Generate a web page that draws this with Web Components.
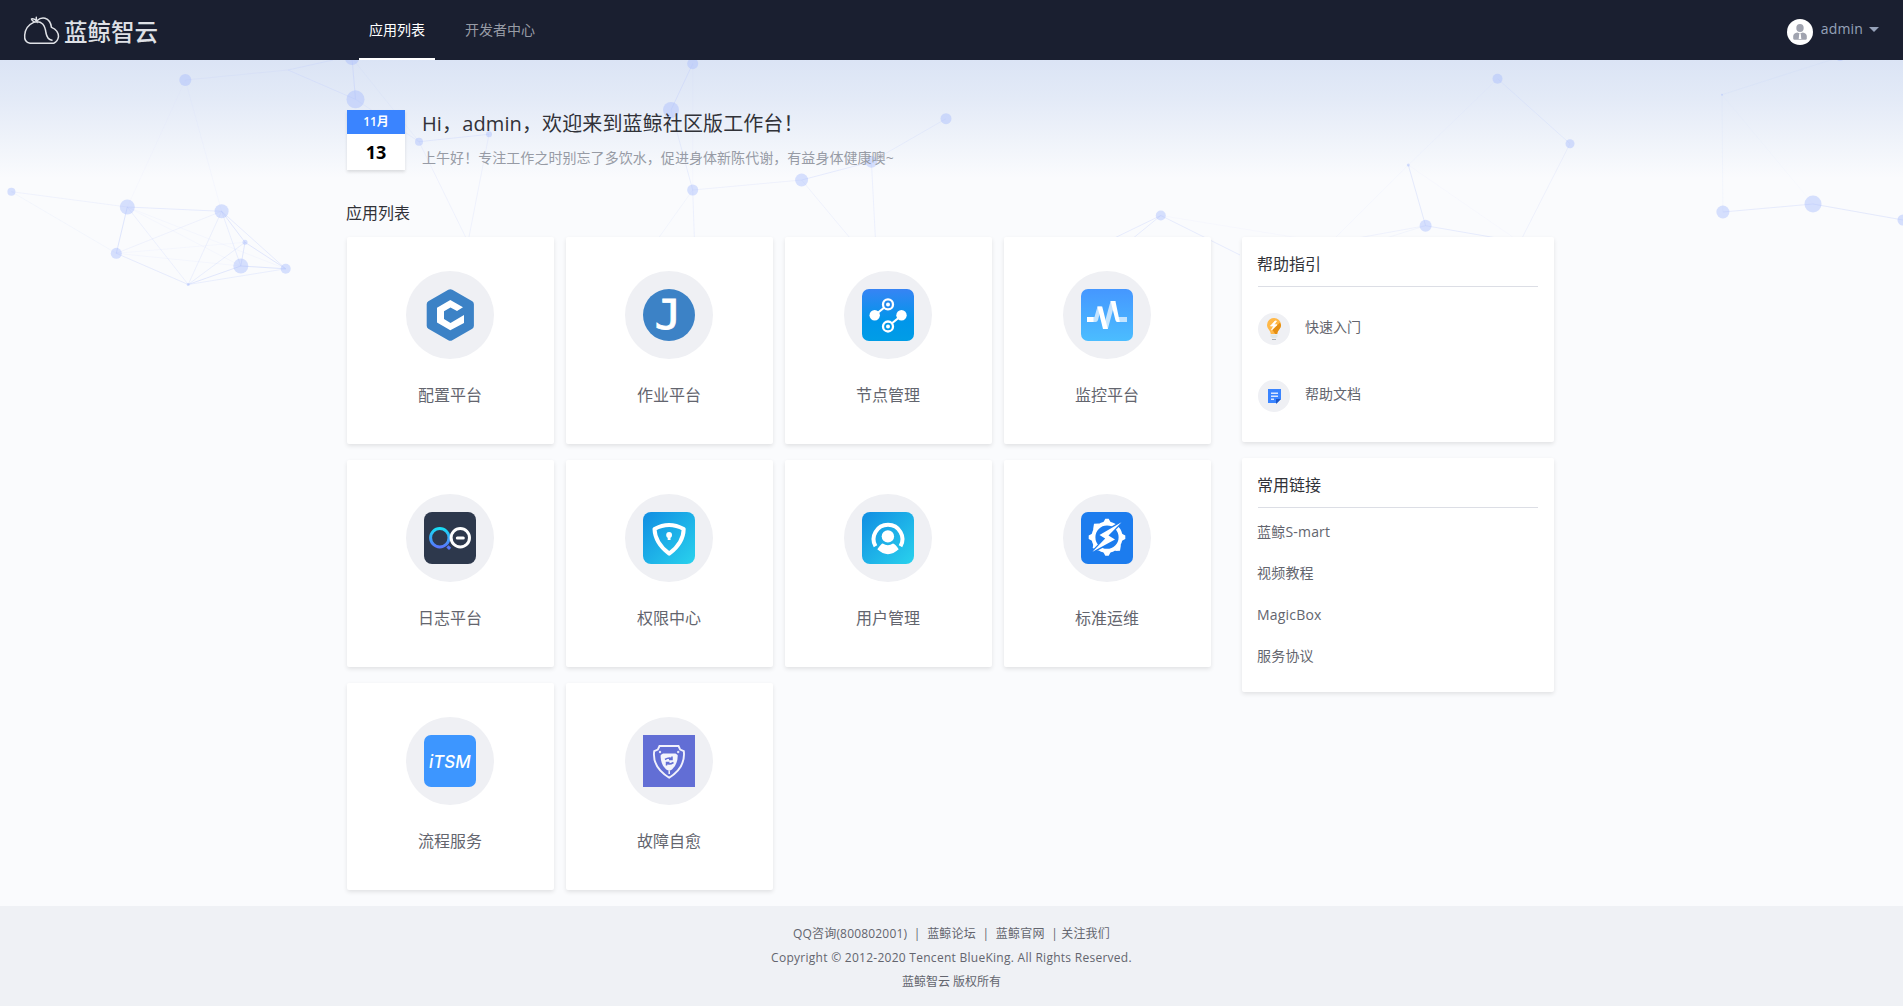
<!DOCTYPE html>
<html lang="zh-CN">
<head>
<meta charset="utf-8">
<title>蓝鲸智云</title>
<style>
html,body{margin:0;padding:0}
body{font-family:"Open Sans","Noto Sans CJK SC",sans-serif;font-size:14px;color:#63656e;background:#fafbfd}
</style>
</head>
<body>
<bk-desktop></bk-desktop>
<script>
const define = (name, html) => {
  const t = document.createElement('template');
  t.innerHTML = html;
  customElements.define(name, class extends HTMLElement {
    constructor() {
      super();
      this.attachShadow({mode: 'open'}).appendChild(t.content.cloneNode(true));
    }
  });
};

// Icons, each on a 52 × 52 grid
const ICONS = {
  cmdb: `<path d="M24.300 .8q2-1.200 4 0l20 11.400q1.600 1 1.600 3v21.600q0 2-1.600 3l-20 11.400q-2 1.200-4 0l-20-11.400q-1.600-1-1.600-3v-21.600q0-2 1.600-3z" fill="#3c82c6"/><path d="M26.300 11 39 18.300 33 22 26.500 18.500 20 22.300V30l6.500 3.900L40 26v8L26.300 41.300 13 33.600V18.700z" fill="#fff"/>`,
  job: `<circle cx="26" cy="26" r="26" fill="#3c82c6"/><text transform="translate(11.500 40) scale(1.120 1)" font-family="DejaVu Sans Mono" font-size="40" fill="#fff" stroke="#fff" stroke-width=".8">J</text>`,
  node: `<defs><linearGradient id="g" x2="0" y2="1"><stop stop-color="#3784f4"/><stop offset=".62" stop-color="#0096ea"/><stop offset="1" stop-color="#009de6"/></linearGradient></defs><rect width="52" height="52" rx="7" fill="url(#g)"/><path d="M12.500 26.500 26 15.500M26 37.500 39.500 26.500" stroke="#fff" stroke-width="2.200"/><circle cx="12.700" cy="26.300" r="5.200" fill="#fff"/><circle cx="39.500" cy="26.300" r="5.200" fill="#fff"/><g fill="#2189ee" stroke="#fff" stroke-width="2.300"><circle cx="26" cy="15.400" r="5"/><circle cx="26" cy="37.500" r="5" fill="#0098e9"/></g><circle cx="26" cy="15.400" r="2" fill="#fff"/><circle cx="26" cy="37.500" r="2" fill="#fff"/>`,
  monitor: `<defs><linearGradient id="g" x2="0" y2="1"><stop stop-color="#4597ff"/><stop offset="1" stop-color="#4bbdff"/></linearGradient></defs><rect width="52" height="52" rx="7" fill="url(#g)"/><path d="M12 28h1.500l3-10.400h4L17 31q-.6 2-2.500 2H12zM22 39.900l7.600-28h4.800l-7.600 28zM37 28h9v5h-8.500z" fill="#fff" opacity=".68"/><path d="M6 28h6.500v5H6zM16.400 17.600h4.800l5.600 22.300H22zM29.600 11.900h4.800L38.800 33h-2.600q-1.400 0-1.800-2z" fill="#fff"/>`,
  log: `<defs><linearGradient id="g" x2="0" y2="1"><stop stop-color="#19dcf5"/><stop offset="1" stop-color="#5876fb"/></linearGradient></defs><rect width="52" height="52" rx="8" fill="#2d384c"/><circle cx="15.800" cy="25.800" r="9.200" fill="none" stroke="url(#g)" stroke-width="3"/><path d="m23.400 34.300 2.700 2.500" stroke="#5877f8" stroke-width="3.200"/><circle cx="36.300" cy="25.800" r="9.200" fill="none" stroke="#fff" stroke-width="3"/><path d="M33.300 26h6" stroke="#fff" stroke-width="3" stroke-linecap="round"/>`,
  iam: `<defs><linearGradient id="g" x2="1" y2="1"><stop stop-color="#118de2"/><stop offset="1" stop-color="#29d2ed"/></linearGradient></defs><rect width="52" height="52" rx="8" fill="url(#g)"/><path d="M11.500 17Q26 9 40.700 17 40.500 31 26.200 41.700 12 31 11.500 17z" fill="none" stroke="#fff" stroke-width="4" stroke-linejoin="round"/><circle cx="26.100" cy="23" r="2.900" fill="#fff"/><path d="M26.100 23v5" stroke="#fff" stroke-width="2.800"/>`,
  user: `<defs><linearGradient id="g" x2="1" y2="1"><stop stop-color="#118de2"/><stop offset="1" stop-color="#29d2ed"/></linearGradient></defs><rect width="52" height="52" rx="8" fill="url(#g)"/><path d="M13.500 34.300A14.400 14.400 0 1 1 38.500 34.300" fill="none" stroke="#fff" stroke-width="4"/><circle cx="25.900" cy="24.400" r="6.200" fill="#fff"/><path d="M15.300 37.300Q19.400 31.500 20.800 31.600q5 3.200 10.200 0 2 .2 5.700 5.700Q26 47 15.300 37.300z" fill="#fff"/>`,
  ops: `<rect width="52" height="52" rx="7" fill="#1c7cee"/><circle cx="26" cy="25.200" r="13.600" fill="none" stroke="#fff" stroke-width="4"/><path d="M22 11l2.300-4.300h3.400L30 11zM22 39.500l2.300 4.300h3.400l2.300-4.300zM12 21.200l-4.300 2.300v3.400L12 29.200zM40 21.200l4.300 2.300v3.400L40 29.200zM18 11.500l-5 .2-.8 5 1 3zM34 38.900l5-.2.8-5-1-3zM12.500 31l-.8 5 6 3z" fill="#fff"/><path d="M40.500 10.200 18.500 23l5.700 3.600L11.500 39.800 34 27.600l-6.500-4z" fill="#fff" stroke="#1c7cee" stroke-width="2.600"/><path d="M40.500 10.200 18.500 23l5.700 3.600L11.500 39.800 34 27.600l-6.500-4z" fill="#fff"/>`,
  itsm: `<rect width="52" height="52" rx="7" fill="#3d96ff"/><text x="5" y="32.500" font-family="Inter,Roboto,sans-serif" font-weight="500" font-style="italic" font-size="17" textLength="41.500" lengthAdjust="spacingAndGlyphs" fill="#fff">iTSM</text>`,
  heal: `<rect width="52" height="52" fill="#626ed5"/><path d="M16.500 11h19l1.700 3.600 3.600 1.600q2 16-14.600 26.500Q9 32 11.200 16.200l3.600-1.600z" fill="none" stroke="#f1f1fc" stroke-width="1.900"/><path d="M20 18.500h12.500l2.200 1.600q.3 9-5.700 14.400L26.200 36l-3-1.500Q17 29 17.700 20.100z" fill="#fff" opacity=".92"/><path d="M22 24.500q4-2.500 7.500-.5M29 21.500v3h-3M30.500 27.500q-4 2.500-7.500.5M23.500 30.500v-3h3" fill="none" stroke="#626ed5" stroke-width="1.500"/><circle cx="17" cy="17" r="1.200" fill="#e1e3f8"/><circle cx="35.200" cy="17" r="1.200" fill="#e1e3f8"/><path d="M26.200 36v3" stroke="#fff" stroke-width="1.400"/>`
};

customElements.define('bk-icon', class extends HTMLElement {
  constructor() {
    super();
    this.attachShadow({mode: 'open'});
  }
  connectedCallback() {
    this.shadowRoot.innerHTML = `<style>:host{display:block;width:52px;height:52px}svg{display:block}</style><svg width="52" height="52" viewBox="0 0 52 52">${ICONS[this.getAttribute('name')]}</svg>`;
  }
});

define('bk-app', `<style>
:host{display:flex;flex-direction:column;align-items:center;box-sizing:border-box;height:207px;padding:34px 1px 0 0;background:#fff;border-radius:2px;box-shadow:0 2px 4px rgba(0,0,0,.1)}
.disc{width:88px;height:88px;border-radius:50%;background:#eff0f4;display:flex;align-items:center;justify-content:center}
.name{margin-top:24px;font-size:16px;line-height:24px;color:#63656e}
</style><div class="disc"><slot name="icon"></slot></div><div class="name"><slot></slot></div>`);

define('bk-nav-item', `<style>
:host{display:block;height:60px;box-sizing:border-box;padding:0 10px;line-height:59px;color:#979ba5}
:host([active]){color:#fff;border-bottom:2px solid #fff}
</style><slot></slot>`);

define('bk-header', `<style>
:host{display:flex;height:60px;background:#1a1f30;position:relative}
.brand{width:359px;display:flex;box-sizing:border-box;padding-left:22px}
.brand span{font-size:23.500px;font-weight:500;line-height:65px;color:#dfe1e6;margin-left:2px;height:60px}
.brand svg{margin-top:14px}
nav{display:flex;gap:20px;flex:1}
.user{display:flex;align-items:center;padding-right:24px;color:#96a2b9}
.user svg.av{margin:4px 8px 0 0}
.user span{line-height:20px;margin-top:-2px;letter-spacing:.15px}
.caret{margin:-1px 0 0 6px;border:5px solid transparent;border-top-color:#96a2b9;border-bottom:0}
</style>
<div class="brand"><svg width="40" height="34" viewBox="22 14 40 34" fill="none" stroke="#dfe1e6" stroke-width="1.500" stroke-linecap="round"><path d="M54 43.200H30q-6-.8-5.300-8.200.8-9 9-12.600 5.500-1.600 9 1.600 2.600 3 3.300 9 1.200 6.500 6 7.200M37 20.700q3.500-3.500 8-2.500 5.500 1.600 6.500 9.200 7 3 7 9.300-.8 5-4.800 6.500M31.500 19q3-.8 5 2-.3-2.700-.2-3.800M34.500 22q-2.500-1-3-3"/></svg><span>蓝鲸智云</span></div>
<nav><bk-nav-item active>应用列表</bk-nav-item><bk-nav-item>开发者中心</bk-nav-item></nav>
<div class="user"><svg class="av" width="26" height="26" viewBox="0 0 26 26"><circle cx="13" cy="13" r="13" fill="#fff"/><g fill="#a0a3af"><ellipse cx="13" cy="9" rx="3.700" ry="4"/><path d="M6.200 19.800v-2.800q.3-3 4-3.500l2.800 1 2.800-1q3.700.5 4 3.500v2.800q-.2.900-1.300.9h-11q-1.100 0-1.300-.9z"/></g><path d="M12.300 14.500h1.400l.6 5.500h-2.600z" fill="#fff"/></svg><span>admin</span><i class="caret"></i></div>`);

// Constellation of nodes behind the greeting
const NODES = [[185.3,80,6],[288,70,0],[352,58,7],[355.5,99.3,9],[419,141.7,4],[489,134.3,3],[11.4,191.700,4],[127.3,207,7.5],[221.6,211.300,7],[245,242.300,2.500],[116.3,253.300,5.500],[240.8,266,7.500],[188.2,284.500,1.500],[285.7,268.800,5],[692.7,63.700,5.500],[671,110,8],[692.7,190,5.500],[801.6,180,6.500],[871.4,161.700,6],[946,118.700,5.500],[1160.8,215.500,5],[1497.5,78.700,5],[1570,143.700,4.500],[1408.3,165,1.500],[1425.6,225.700,6],[1722.9,212,6.500],[1813,204,8.500],[1903,220,5.500],[1722,94.700,1],[1840,57,4],[468,242,0],[694.5,242,0],[650,250,0],[860,250,0],[876,250,0],[1240,255,0],[1100,245,0],[1115,253,0],[1520,242,0],[1330,243,0],[333,60,0],[1370,243,0]];
const LINKS = [[0,1,.4],[1,3,.7],[1,40,.7],[2,3,1],[2,4,.3],[3,4,.5],[4,5,.7],[4,30,.4],[5,30,.4],[0,8,.2],[0,7,.15],[6,7,.4],[6,10,.25],[7,8,.7],[7,10,1],[7,12,.5],[7,13,.2],[7,11,.2],[8,10,.4],[8,12,.5],[8,9,.9],[8,11,.6],[8,13,.7],[9,10,.2],[9,11,.9],[9,12,.6],[9,13,.9],[10,12,.7],[10,11,.2],[11,12,.9],[11,13,1],[12,13,.6],[14,15,.9],[14,16,.15],[15,16,.6],[16,17,.4],[16,31,.5],[16,32,.3],[17,18,.7],[17,33,.4],[18,19,.5],[18,34,.5],[20,35,.7],[20,36,.7],[20,37,.7],[20,39,.15],[21,22,.6],[21,23,.2],[22,38,.4],[23,24,.8],[23,39,.2],[23,38,.15],[24,38,.7],[24,39,.4],[24,41,.3],[25,26,.7],[26,27,.8],[25,28,.25],[28,29,.35],[28,26,.1]];
define('bk-stars', `<style>:host{display:block;position:absolute;top:60px;left:0;right:0;height:240px;overflow:hidden;background:linear-gradient(#dbe4f5 0,#e3eaf7 38px,#fafbfd 118px)}svg{display:block}</style><svg width="1903" height="240" viewBox="0 60 1903 240">${LINKS.map(([a,b,o]) => `<path d="M${NODES[a][0]} ${NODES[a][1]}L${NODES[b][0]} ${NODES[b][1]}" stroke="#c3cffb" stroke-opacity="${o * .5}"/>`).join('')}${NODES.map(([x,y,r]) => `<circle cx="${x}" cy="${y}" r="${r}" fill="#a9bdfc" fill-opacity=".45"/>`).join('')}</svg>`);

define('bk-greeting', `<style>
:host{display:flex;gap:17px;height:60px}
.date{width:58px;height:60px;text-align:center;background:#fff;box-shadow:0 2px 3px rgba(0,0,0,.12)}
.m{height:24px;line-height:24px;font-size:12px;font-weight:600;color:#fff;background:#3a84ff}
.d{line-height:37px;font-size:18px;font-weight:700;color:#000}
.t{font-size:20px;line-height:28px;color:#313238;letter-spacing:.12px}
.s{margin-top:9px;line-height:22px;color:#979ba5;letter-spacing:.05px}
</style><div class="date"><div class="m">11月</div><div class="d">13</div></div><div><div class="t"><slot></slot></div><div class="s"><slot name="tip"></slot></div></div>`);

define('bk-panel', `<style>
:host{display:block;box-sizing:border-box;padding:0 16px;background:#fff;border-radius:2px;box-shadow:0 2px 4px rgba(0,0,0,.1)}
h3{margin:0;height:49px;box-sizing:content-box;border-bottom:1px solid #dcdee5;font-weight:400;font-size:16px;line-height:54px;color:#313238;text-indent:-1px}
</style><h3><slot name="title"></slot></h3><slot></slot>`);

define('bk-guide', `<style>
:host{display:flex;gap:15px;height:32px;line-height:28px}
.c{width:32px;height:32px;border-radius:50%;background:#eff0f4}
</style><div class="c"><slot name="icon"></slot></div><slot></slot>`);

define('bk-link', `<style>:host{display:block;height:41.330px;line-height:22px;letter-spacing:.2px;text-indent:-1px}</style><slot></slot>`);

define('bk-footer', `<style>
:host{display:block;height:100px;box-sizing:border-box;padding-top:16px;background:#eff1f5;text-align:center;font-size:12px;line-height:24px;color:#63656e}
.l{display:flex;justify-content:center;white-space:pre;letter-spacing:.18px}
.c{letter-spacing:.27px}
</style><div class="l">QQ咨询(800802001)  |  蓝鲸论坛  |  蓝鲸官网  | 关注我们</div><div class="c">Copyright © 2012-2020 Tencent BlueKing. All Rights Reserved.</div><div>蓝鲸智云 版权所有</div>`);

const app = (icon, name) => `<bk-app><bk-icon slot="icon" name="${icon}"></bk-icon>${name}</bk-app>`;
define('bk-desktop', `<style>
:host{display:flex;flex-direction:column;min-height:1006px;position:relative}
main{position:relative;flex:1;width:1207px;margin-left:347px;padding-top:50px;box-sizing:border-box}
h2{margin:30px 0 0;font-weight:400;font-size:16px;line-height:26px;color:#313238;text-indent:-1px}
.cols{display:flex;align-items:flex-start;gap:31px;margin-top:11px}
.grid{display:grid;grid-template-columns:repeat(4,207px);gap:16px 12px}
aside{width:312px;display:flex;flex-direction:column;gap:16px}
.help{height:205px}.links{height:234px}
.help bk-guide{margin-top:26px}.help bk-guide+bk-guide{margin-top:35px}
.links bk-link:first-of-type{margin-top:13px}
svg{display:block}
bk-header{z-index:1}
</style>
<bk-stars></bk-stars>
<bk-header></bk-header>
<main>
<bk-greeting>Hi，admin，欢迎来到蓝鲸社区版工作台！<span slot="tip">上午好！专注工作之时别忘了多饮水，促进身体新陈代谢，有益身体健康噢~</span></bk-greeting>
<h2>应用列表</h2>
<div class="cols">
<div class="grid">${app('cmdb','配置平台')}${app('job','作业平台')}${app('node','节点管理')}${app('monitor','监控平台')}${app('log','日志平台')}${app('iam','权限中心')}${app('user','用户管理')}${app('ops','标准运维')}${app('itsm','流程服务')}${app('heal','故障自愈')}</div>
<aside>
<bk-panel class="help"><span slot="title">帮助指引</span>
<bk-guide><svg slot="icon" width="32" height="32" viewBox="0 0 32 32"><path d="M16 5a7 7 0 0 0-7 7c0 4 3.500 5 3.800 9h6.400c.3-4 3.800-5 3.800-9a7 7 0 0 0-7-7z" fill="#ffb848"/><path d="M22 9.500 23 12c0 4-3.500 5-3.800 9h-2L14.500 17z" fill="#e58f12"/><path d="m17 8-4.500 5h3.200L13.500 17l5.500-5.200h-3L18.500 8z" fill="#fff" stroke="#fff" stroke-width=".8"/><path d="M12.500 21.500h7v2l-1.500 1.500h-4l-1.500-1.500z" fill="#dfe7e7"/><path d="M14 26.500h4" stroke="#a8afb2"/></svg>快速入门</bk-guide>
<bk-guide><svg slot="icon" width="32" height="32" viewBox="0 0 32 32"><path d="M10 9h13v10l-4 4H10z" fill="#3a84ff"/><path d="M18 19h5l-5 5z" fill="#1b55c5"/><path d="M13 13.200h7M13 16.200h7M13 19.200h3" stroke="#dbe8ff" stroke-width="1.500"/></svg>帮助文档</bk-guide>
</bk-panel>
<bk-panel class="links"><span slot="title">常用链接</span><bk-link>蓝鲸S-mart</bk-link><bk-link>视频教程</bk-link><bk-link>MagicBox</bk-link><bk-link>服务协议</bk-link></bk-panel>
</aside>
</div>
</main>
<bk-footer></bk-footer>`);
</script>
</body>
</html>
